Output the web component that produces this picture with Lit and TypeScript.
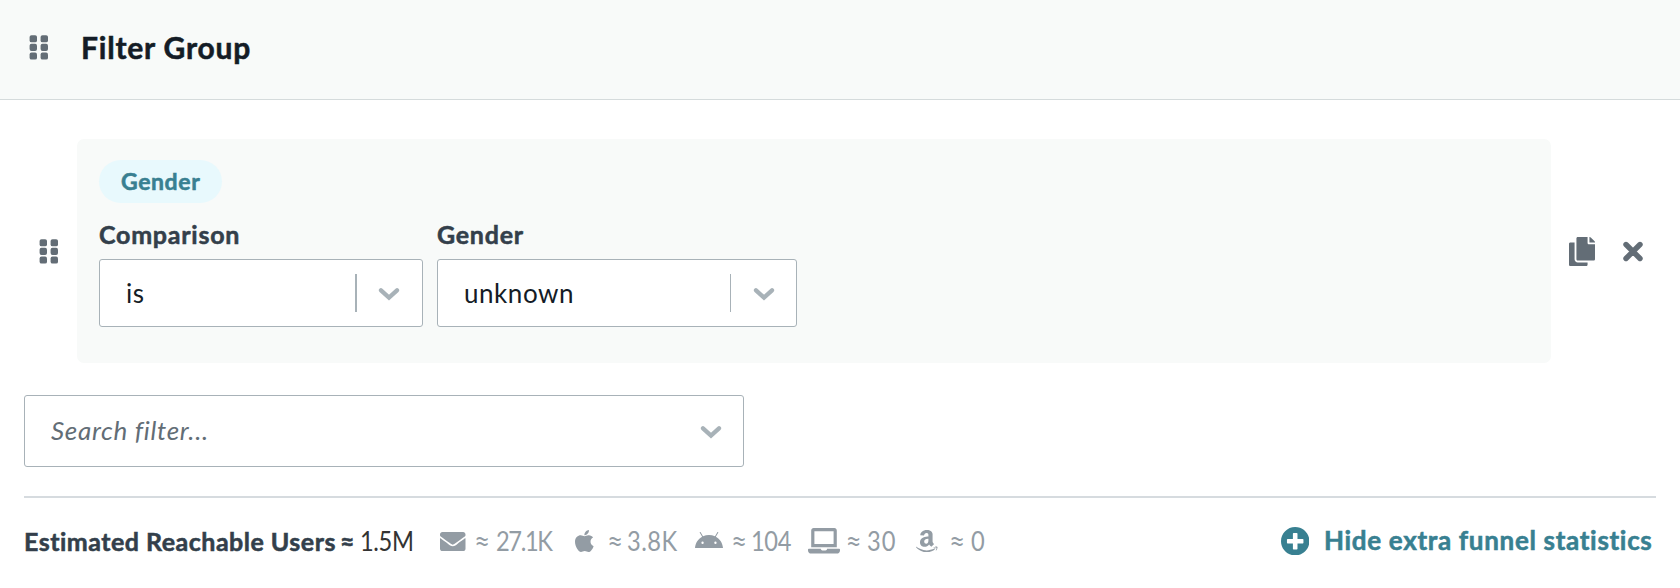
import { LitElement, html, css, svg } from "lit";
import { customElement, property } from "lit/decorators.js";

const MAIL = "M502.3 190.8c3.9-3.1 9.7-.2 9.7 4.7V400c0 26.5-21.5 48-48 48H48c-26.5 0-48-21.5-48-48V195.6c0-5 5.7-7.8 9.7-4.7 22.4 17.4 52.1 39.5 154.1 113.6 21.1 15.4 56.7 47.8 92.2 47.6 35.7.3 72-32.8 92.3-47.6 102-74.1 131.6-96.3 154-113.7zM256 320c23.2.4 56.6-29.2 73.4-41.4 132.7-96.3 142.8-104.7 173.4-128.7 5.8-4.5 9.2-11.5 9.2-18.9v-19c0-26.5-21.5-48-48-48H48c-26.5 0-48 21.5-48 48v19c0 7.4 3.4 14.3 9.2 18.9 30.6 23.9 40.7 32.4 173.4 128.7 16.8 12.2 50.2 41.8 73.4 41.4z";
const APPLE = "M318.7 268.7c-.2-36.7 16.4-64.4 50-84.8-18.8-26.9-47.2-41.7-84.7-44.6-35.5-2.8-74.3 20.7-88.5 20.7-15 0-49.4-19.7-76.4-19.7C63.3 141.2 4 184.8 4 273.5q0 39.3 14.4 81.2c12.8 36.7 59 126.7 107.2 125.2 25.2-.6 43-17.9 75.8-17.9 31.8 0 48.3 17.9 76.4 17.9 48.6-.7 90.4-82.5 102.6-119.3-65.2-30.7-61.7-90-61.7-91.9zm-56.6-164.2c27.3-32.4 24.8-61.9 24-72.5-24.1 1.4-52 16.4-67.9 34.9-17.5 19.8-27.8 44.3-25.6 71.9 26.1 2 49.9-11.4 69.5-34.3z";
const ANDROID = "M420.55,301.93a24,24,0,1,1,24-24,24,24,0,0,1-24,24m-265.1,0a24,24,0,1,1,24-24,24,24,0,0,1-24,24m273.7-144.48,47.94-83a10,10,0,1,0-17.27-10h0l-48.54,84.07a301.25,301.25,0,0,0-246.56,0L116.18,64.45a10,10,0,1,0-17.27,10h0l47.94,83C64.53,202.22,8.24,285.55,0,384H576c-8.24-98.45-64.54-181.78-146.85-226.55";
const LAPTOP = "M624 416H381.54c-.74 19.81-14.71 32-32.74 32H288c-18.69 0-33.02-17.47-32.77-32H16c-8.8 0-16 7.2-16 16v16c0 35.2 28.8 64 64 64h512c35.2 0 64-28.8 64-64v-16c0-8.8-7.2-16-16-16zM576 48c0-26.4-21.6-48-48-48H112C85.6 0 64 21.6 64 48v336h512V48zm-64 272H128V64h384v256z";
const AMAZON = "M257.2 162.7c-48.7 1.8-169.5 15.5-169.5 117.5 0 109.5 138.3 114 183.5 43.2 6.5 10.2 35.4 37.5 45.3 46.8l56.8-56S341 288.9 341 261.4V114.3C341 89 316.5 32 228.7 32 140.7 32 94 87 94 136.3l73.5 6.8c16.3-49.5 54.2-49.5 54.2-49.5 40.7-.1 35.5 29.8 35.5 69.1zm0 86.8c0 80-84.2 68-84.2 17.2 0-47.2 50.5-56.7 84.2-57.8v40.6zm136 163.5c-7.7 10-70 67-174.5 67S34.2 408.5 9.7 379c-6.8-7.7 1-11.3 5.5-8.3C88.5 415.2 203 488.5 387.7 401c7.5-3.7 13.3 2 5.5 12zm39.8 2.2c-6.5 15.8-16 26.8-21.2 31-5.5 4.5-9.5 2.7-6.5-3.8s19.3-46.5 12.7-55c-6.5-8.3-37-4.3-48-3.2-10.8 1-13 2-14-.3-2.3-5.7 21.7-15.5 37.5-17.5 15.7-1.8 41-.8 46 5.7 3.7 5.1 0 27.1-6.5 43.1z";
const COPY = "M320 448v40c0 13.255-10.745 24-24 24H24c-13.255 0-24-10.745-24-24V120c0-13.255 10.745-24 24-24h72v296c0 30.879 25.121 56 56 56h168zm0-344V0H152c-13.255 0-24 10.745-24 24v368c0 13.255 10.745 24 24 24h272c13.255 0 24-10.745 24-24V128H344c-13.2 0-24-10.8-24-24zm120.971-31.029L375.029 7.029A24 24 0 0 0 358.059 0H352v96h96v-6.059a24 24 0 0 0-7.029-16.97z";
const PLUS = "M256 8C119 8 8 119 8 256s111 248 248 248 248-111 248-248S393 8 256 8zm144 276c0 6.6-5.4 12-12 12h-92v92c0 6.6-5.4 12-12 12h-56c-6.6 0-12-5.4-12-12v-92h-92c-6.6 0-12-5.4-12-12v-56c0-6.6 5.4-12 12-12h92v-92c0-6.6 5.4-12 12-12h56c6.6 0 12 5.4 12 12v92h92c6.6 0 12 5.4 12 12v56z";

const icon = (d: string, viewBox: string, width: number, height: number) =>
  html`<svg viewBox=${viewBox} width=${width} height=${height} preserveAspectRatio="none"><path fill="currentColor" d=${d}></path></svg>`;

const grip = html`<svg width="19" height="25" viewBox="0 0 19 25">
  ${[0, 11].map((x) => [0, 8.65, 17.3].map((y) => svg`<rect x=${x + 0.6} y=${y + 0.2} width="7.4" height="7.1" rx="1.9" fill="currentColor"></rect>`))}
</svg>`;

const chevron = html`<svg width="22" height="14" viewBox="0 0 22 14">
  <path d="M3 3.3 11 10.6 19 3.3" fill="none" stroke="currentColor" stroke-width="4.3" stroke-linecap="round" stroke-linejoin="miter"></path>
</svg>`;

@customElement("select-box")
export class SelectBox extends LitElement {
  @property() value = "";
  @property() placeholder = "";
  @property() divider = "none";

  static styles = css`
    :host {
      display: flex;
      align-items: center;
      box-sizing: border-box;
      border: 1px solid #a8b2b8;
      border-radius: 3px;
      background: #fff;
      font-size: 26px;
      line-height: 36px;
      color: #141c26;
    }
    .text {
      flex: 1;
      padding: 0 0 1px 26px;
      letter-spacing: 0.55px;
    }
    .placeholder {
      padding-bottom: 3px;
      color: #626d76;
      font-style: italic;
      letter-spacing: 0.7px;
    }
    .divider {
      height: 38px;
      background: #a8b2b8;
    }
    .divider.thick { width: 2px; }
    .divider.thin { width: 1px; }
    .arrow {
      display: flex;
      justify-content: center;
      width: 65px;
      padding-top: 1px;
      color: #a8b2b8;
    }
    .thick + .arrow {
      box-sizing: border-box;
      padding-right: 2px;
    }
  `;

  render() {
    return html`
      ${this.value
        ? html`<span class="text">${this.value}</span>`
        : html`<span class="text placeholder">${this.placeholder}</span>`}
      ${this.divider === "none" ? null : html`<span class="divider ${this.divider}"></span>`}
      <span class="arrow">${chevron}</span>
    `;
  }
}

@customElement("app-root")
export class AppRoot extends LitElement {
  static styles = css`
    :host {
      display: block;
      height: 588px;
      box-sizing: border-box;
      background: #fff;
      font-family: Lato, "Open Sans", sans-serif;
      color: #333f4b;
      overflow: hidden;
    }
    svg { display: block; }
    header {
      display: flex;
      align-items: center;
      box-sizing: border-box;
      height: 100px;
      padding: 0 0 4px 29px;
      background: #f8faf9;
      border-bottom: 1px solid #d5dbdc;
      color: #636d76;
    }
    h1, .pill, label, .reach, .about, .toggle span {
      font-weight: 700;
      -webkit-text-stroke: 0.55px currentColor;
    }
    h1 {
      margin: 0 0 0 33px;
      padding-bottom: 2px;
      font-size: 30px;
      line-height: 40px;
      letter-spacing: 0.8px;
      color: #141c26;
    }
    .row {
      display: flex;
      align-items: center;
      padding: 39px 37px 0 39px;
      color: #636d76;
    }
    .card {
      flex: 1;
      box-sizing: border-box;
      height: 224px;
      margin: 0 18px 0 19px;
      padding: 21px 22px 0;
      border-radius: 7px;
      background: #f8faf9;
      color: #333f4b;
    }
    .pill {
      display: flex;
      align-items: center;
      box-sizing: border-box;
      width: 123px;
      height: 43px;
      padding: 0 0 2px 22px;
      border-radius: 22px;
      background: #e8f9fd;
      color: #388091;
      font-size: 23px;
      letter-spacing: 0.6px;
    }
    .fields {
      display: flex;
      gap: 14px;
      margin-top: 13px;
    }
    label {
      display: block;
      margin-bottom: 7px;
      font-size: 25px;
      line-height: 36px;
      letter-spacing: 0.75px;
    }
    .comparison { width: 324px; }
    .gender { width: 360px; }
    .fields select-box { height: 68px; }
    .close { margin-left: 28px; }
    .search {
      width: 720px;
      height: 72px;
      margin: 32px 0 0 24px;
    }
    footer {
      display: flex;
      align-items: center;
      height: 86px;
      margin: 29px 24px 0;
      border-top: 2px solid #d6dbdf;
      font-size: 25px;
      line-height: 36px;
      white-space: nowrap;
    }
    .reach {
      width: 316px;
      padding-bottom: 1px;
      letter-spacing: 0.49px;
    }
    .about { width: 20px; }
    .total {
      width: 80px;
      color: #333;
    }
    .total, .value {
      font-size: 26px;
      letter-spacing: -0.4px;
      transform: scaleX(0.91);
      transform-origin: left;
    }
    .stats {
      display: grid;
      grid-template-columns: 34px 22px 79px 32px 20px 68px 36px 20px 57px 37.5px 21.5px 49px 33px 22px 30px;
      align-items: center;
      font-size: 28px;
      color: #939ca4;
    }
    .mail { letter-spacing: -1.5px; }
    .apple { letter-spacing: 0.5px; }
    .laptop { letter-spacing: 1px; }
    .android-icon { padding-bottom: 2px; }
    .toggle {
      display: flex;
      align-items: center;
      gap: 15px;
      margin-left: auto;
      color: #388091;
    }
    .toggle span {
      width: 332px;
      padding-bottom: 2px;
      font-size: 26px;
      letter-spacing: 0.68px;
    }
  `;

  private stats = [
    { id: "mail", glyph: icon(MAIL, "0 64 512 384", 25.5, 19), value: "27.1K" },
    { id: "apple", glyph: icon(APPLE, "4 32 376 448", 18.6, 22), value: "3.8K" },
    { id: "android", glyph: icon(ANDROID, "0 60 576 324", 28, 16), value: "104" },
    { id: "laptop", glyph: icon(LAPTOP, "0 0 640 512", 32, 25.6), value: "30" },
    { id: "amazon", glyph: icon(AMAZON, "8 32 432 448", 21.5, 22.3), value: "0" },
  ];

  render() {
    return html`
      <header>
        ${grip}
        <h1>Filter Group</h1>
      </header>
      <div class="row">
        ${grip}
        <section class="card">
          <div class="pill">Gender</div>
          <div class="fields">
            <div class="comparison">
              <label>Comparison</label>
              <select-box value="is" divider="thick"></select-box>
            </div>
            <div class="gender">
              <label>Gender</label>
              <select-box value="unknown" divider="thin"></select-box>
            </div>
          </div>
        </section>
        ${icon(COPY, "0 0 448 512", 26, 29)}
        <svg class="close" width="20" height="21" viewBox="0 0 20 21">
          <path d="M3 3.5 17 17.5M17 3.5 3 17.5" stroke="currentColor" stroke-width="5.4" stroke-linecap="round"></path>
        </svg>
      </div>
      <select-box class="search" placeholder="Search filter..."></select-box>
      <footer>
        <span class="reach">Estimated Reachable Users</span>
        <span class="about">≈</span>
        <span class="total">1.5M</span>
        <div class="stats">
          ${this.stats.map((s) => html`<span class="${s.id}-icon">${s.glyph}</span><span>≈</span><span class="value ${s.id}">${s.value}</span>`)}
        </div>
        <div class="toggle">
          ${icon(PLUS, "8 8 496 496", 28.4, 28.4)}
          <span>Hide extra funnel statistics</span>
        </div>
      </footer>
    `;
  }
}
